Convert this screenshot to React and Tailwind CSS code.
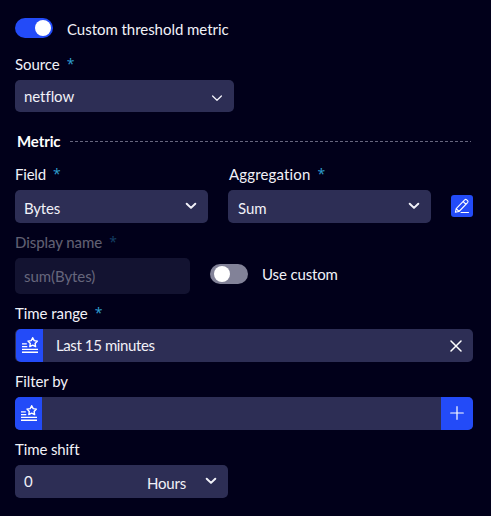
import React from "react";

function Label({ children, required, className = "" }) {
  return (
    <div className={"flex h-5 items-center whitespace-nowrap text-[15px] leading-5 " + className}>
      <span>{children}</span>
      {required && (
        <span className="ml-[7px] h-5 w-[7px] font-['Open_Sans',sans-serif] text-[14px] leading-5 text-[#2f9fd0]">*</span>
      )}
    </div>
  );
}

function Chevron({ thin }) {
  return (
    <svg width="12" height="8" viewBox="0 0 12 8" fill="none" stroke="currentColor" strokeWidth={thin ? 1.3 : 2} strokeLinecap="round" strokeLinejoin="round">
      <path d={thin ? "M1.6 2 6 6.2 10.4 2" : "M1.7 1.8 6 5.9 10.3 1.8"} />
    </svg>
  );
}

function Toggle({ on }) {
  return (
    <div className={"flex h-5 w-[38px] shrink-0 items-center rounded-full " + (on ? "justify-end bg-[#234bf8] pr-0.5" : "justify-start bg-[#828298] pl-1")}>
      <div className="h-4 w-4 rounded-full bg-white" />
    </div>
  );
}

function FavoritesButton() {
  return (
    <div className="flex h-full w-[27px] shrink-0 items-center justify-center rounded-l-[5px] bg-[#234bf8]">
      <svg className="ml-px" width="16" height="17" viewBox="0 0 16 17" fill="none" stroke="white" strokeWidth="1.4" strokeLinejoin="round">
        <path d="M10.7 .7 12.2 3.6 15.4 4.1 13.1 6.4 13.6 9.6 10.7 8.1 7.8 9.6 8.3 6.4 6 4.1 9.2 3.6Z" />
        <path d="M0 6.9H4.8M0 9.6H5.3M0 12.4H16M0 15.3H16" />
      </svg>
    </div>
  );
}

const field = "flex items-center rounded-[5px] bg-[#2d2e55] text-[15px] leading-5 ";

export default function App() {
  return (
    <main className="flex h-[516px] w-[491px] flex-col bg-[#01001a] pl-[15px] pr-[18px] pt-[18px] font-['Lato','Open_Sans',sans-serif] tracking-[-0.06px] text-[#f1f1f8] [font-variant-ligatures:none]">
      <div className="flex h-5 items-center gap-[14px]">
        <Toggle on />
        <span className="pt-0.5 text-[15px] leading-5 tracking-[-0.04px]">Custom threshold metric</span>
      </div>

      <Label required className="mt-4">Source</Label>
      <div className={field + "mt-1.5 h-8 w-[219px] justify-between pl-[9px] pr-[11px]"}>
        <span>netflow</span>
        <span className="pt-1"><Chevron thin /></span>
      </div>

      <div className="mt-[19px] flex h-5 items-center gap-[10px] pl-0.5 pr-0.5">
        <span className="w-[43px] whitespace-nowrap text-[15px] font-bold leading-5 tracking-[-0.1px] text-white">Metric</span>
        <svg className="h-px min-w-0 flex-1" preserveAspectRatio="none">
          <line x1="0" y1=".5" x2="100%" y2=".5" stroke="#66667e" strokeDasharray="3 2" />
        </svg>
      </div>

      <div className="mt-[13px] flex">
        <div className="w-[193px]">
          <Label required className="tracking-[-0.2px]">Field</Label>
          <div className={field + "mt-1.5 h-[33px] justify-between pl-[9px] pr-[11px]"}>
            <span className="pt-[3px] tracking-[-0.2px]">Bytes</span>
            <span className="-mt-px"><Chevron /></span>
          </div>
        </div>
        <div className="ml-5 w-[203px]">
          <Label required className="pl-px tracking-[0.15px]">Aggregation</Label>
          <div className={field + "mt-1.5 h-[33px] justify-between pl-[10px] pr-[11px]"}>
            <span className="pt-[3px]">Sum</span>
            <span className="-mt-px"><Chevron /></span>
          </div>
        </div>
        <div className="ml-5 mt-[31px] flex h-[22px] w-[22px] items-center justify-center rounded-[3px] bg-[#234bf8]">
          <svg width="16" height="16" viewBox="0 0 16 16" fill="none" stroke="white" strokeWidth="1.1" strokeLinejoin="round" strokeLinecap="round">
            <path d="M1.4 14.3 2.2 10.6 10.7 1.8Q11.7.9 12.7 1.8L13.6 2.7Q14.5 3.7 13.6 4.7L5 13.5ZM2.2 10.6 5 13.5M9.1 3.5 12 6.3M7 14.5H14.5" />
          </svg>
        </div>
      </div>

      <Label required className="mt-[9px] opacity-40">Display name</Label>
      <div className="mt-1.5 flex h-9">
        <div className="flex h-9 w-[175px] items-center rounded-[5px] bg-[#131331] pl-[9px] text-[15px] leading-5 text-[#66667c]">sum(Bytes)</div>
        <div className="ml-5 flex h-8 items-center gap-[14px]">
          <Toggle />
          <span className="text-[15px] leading-5 tracking-[-0.13px]">Use custom</span>
        </div>
      </div>

      <Label required className="mt-[9px]">Time range</Label>
      <div className={field + "mt-1.5 h-[33px] pl-px"}>
        <FavoritesButton />
        <span className="-mt-px ml-[13px] flex-1 tracking-[-0.4px]">Last 15 minutes</span>
        <svg className="mr-[11px]" width="12" height="12" viewBox="0 0 12 12" stroke="white" strokeWidth="1.5" strokeLinecap="round">
          <path d="M1 1 11 11M11 1 1 11" />
        </svg>
      </div>

      <Label className="mt-[9px] tracking-[-0.1px]">Filter by</Label>
      <div className={field + "mt-1.5 h-[33px] justify-between"}>
        <FavoritesButton />
        <div className="flex h-full w-8 items-center justify-center rounded-r-[5px] bg-[#234bf8]">
          <svg className="-mt-px" width="14" height="14" viewBox="0 0 14 14" stroke="white" strokeWidth="1.2" strokeLinecap="round">
            <path d="M7 .7V13.3M.7 7H13.3" />
          </svg>
        </div>
      </div>

      <Label className="mt-[9px] tracking-[-0.12px]">Time shift</Label>
      <div className={field + "mt-1.5 h-[33px] w-[213px] pl-[9px] pr-[11px]"}>
        <span className="-mt-[2px] flex-1">0</span>
        <span className="mr-[19px] pt-[3px] tracking-[-0.2px]">Hours</span>
        <span className="-mt-px"><Chevron /></span>
      </div>
    </main>
  );
}
